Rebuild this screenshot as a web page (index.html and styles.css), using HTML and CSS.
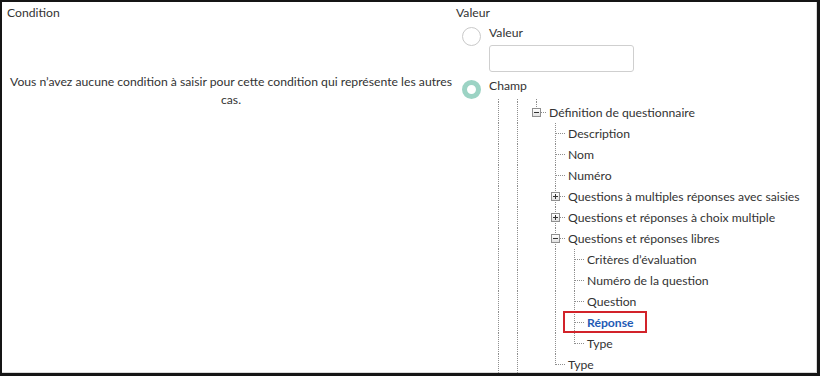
FILE: index.html
```html
<!DOCTYPE html>
<html lang="fr">
<head>
<meta charset="utf-8">
<title>Condition</title>
<link rel="stylesheet" href="styles.css">
</head>
<body>
<div class="frame">
  <div class="layout">
    <section class="col-left">
      <div class="col-head">Condition</div>
      <p class="info">Vous n’avez aucune condition à saisir pour cette condition qui représente les autres cas.</p>
    </section>
    <section class="col-right">
      <div class="col-head">Valeur</div>
      <div class="option">
        <span class="radio"></span>
        <div class="option-body">
          <div class="option-label">Valeur</div>
          <div class="input"></div>
        </div>
      </div>
      <div class="option option-champ">
        <span class="radio checked"></span>
        <div class="option-body">
          <div class="option-label">Champ</div>
        </div>
      </div>
      <div class="tree">
        <div class="row row-top"><span class="c v"></span><span class="c v"></span><span class="c v"></span></div>
        <div class="row"><span class="c v"></span><span class="c v"></span><span class="c up"><i class="box minus"></i></span><span class="t">Définition de questionnaire</span></div>
        <div class="row"><span class="c v"></span><span class="c v"></span><span class="c"></span><span class="c tee"></span><span class="t">Description</span></div>
        <div class="row"><span class="c v"></span><span class="c v"></span><span class="c"></span><span class="c tee"></span><span class="t">Nom</span></div>
        <div class="row"><span class="c v"></span><span class="c v"></span><span class="c"></span><span class="c tee"></span><span class="t">Numéro</span></div>
        <div class="row"><span class="c v"></span><span class="c v"></span><span class="c"></span><span class="c tee"><i class="box plus"></i></span><span class="t">Questions à multiples réponses avec saisies</span></div>
        <div class="row"><span class="c v"></span><span class="c v"></span><span class="c"></span><span class="c tee"><i class="box plus"></i></span><span class="t">Questions et réponses à choix multiple</span></div>
        <div class="row"><span class="c v"></span><span class="c v"></span><span class="c"></span><span class="c tee"><i class="box minus"></i></span><span class="t">Questions et réponses libres</span></div>
        <div class="row"><span class="c v"></span><span class="c v"></span><span class="c"></span><span class="c v"></span><span class="c tee"></span><span class="t">Critères d’évaluation</span></div>
        <div class="row"><span class="c v"></span><span class="c v"></span><span class="c"></span><span class="c v"></span><span class="c tee"></span><span class="t">Numéro de la question</span></div>
        <div class="row"><span class="c v"></span><span class="c v"></span><span class="c"></span><span class="c v"></span><span class="c tee"></span><span class="t">Question</span></div>
        <div class="row row-selected"><span class="c v"></span><span class="c v"></span><span class="c"></span><span class="c v"></span><span class="c tee"></span><span class="t selected">Réponse</span><span class="highlight"></span></div>
        <div class="row"><span class="c v"></span><span class="c v"></span><span class="c"></span><span class="c v"></span><span class="c elbow"></span><span class="t">Type</span></div>
        <div class="row"><span class="c v"></span><span class="c v"></span><span class="c"></span><span class="c elbow"></span><span class="t">Type</span></div>
      </div>
    </section>
  </div>
</div>
</body>
</html>
```

FILE: styles.css
```css
* { box-sizing: border-box; }
html, body { margin: 0; padding: 0; background: #fff; }
body {
  font-family: Lato, "Noto Sans", sans-serif;
  font-size: 12.2px;
  color: #333;
}
.frame {
  width: 820px;
  height: 376px;
  border-style: solid;
  border-color: #151515;
  border-width: 2px 3px 3px 2px;
  overflow: hidden;
}
.layout {
  height: 100%;
  display: grid;
  grid-template-columns: 454px 1fr;
  border-right: 1px solid #d8d8d8;
  border-bottom: 1px solid #d8d8d8;
}
.col-head {
  line-height: 18px;
  padding-top: 2px;
}
.col-left .col-head { padding-left: 5px; }
.info {
  margin: 51px 0 0 0;
  padding: 0 4px 0 8px;
  text-align: center;
  line-height: 18px;
}
.option {
  display: flex;
  gap: 8px;
  padding-left: 6px;
  margin-top: 2px;
}
.option-champ { margin-top: 5px; }
.radio {
  flex: none;
  width: 19px;
  height: 19px;
  border-radius: 50%;
  border: 1px solid #c9c9c9;
  margin-top: 3px;
  background: #fff;
}
.radio.checked {
  border: 5px solid #9cd3c4;
  margin-top: 3px;
}
.option-label { line-height: 18px; }
.input {
  width: 145px;
  height: 27px;
  margin-top: 3px;
  border: 1px solid #cfcfcf;
  border-radius: 3px;
  background: #fff;
}
.tree {
  margin-left: 33px;
  margin-top: 0;
}
.row {
  display: flex;
  height: 21px;
  align-items: center;
  position: relative;
  white-space: nowrap;
}
.row-top { height: 3px; }
.c {
  flex: none;
  width: 19px;
  height: 100%;
  position: relative;
}
.c.v::before, .c.tee::before, .c.elbow::before, .c.up::before {
  content: "";
  position: absolute;
  left: 9px;
  top: 0;
  bottom: 0;
  border-left: 1px dotted #8e8e8e;
}
.c.elbow::before, .c.up::before { bottom: 10px; }
.c.tee::after, .c.elbow::after, .c.up::after {
  content: "";
  position: absolute;
  left: 10px;
  right: 0;
  top: 10px;
  border-top: 1px dotted #8e8e8e;
}
.box {
  position: absolute;
  left: 5px;
  top: 6px;
  width: 9px;
  height: 9px;
  border: 1px solid #8f8f8f;
  background: linear-gradient(#ffffff, #e2e2e2);
  z-index: 1;
}
.box::before {
  content: "";
  position: absolute;
  left: 1px;
  right: 1px;
  top: 3px;
  height: 1px;
  background: #333;
}
.box.plus::after {
  content: "";
  position: absolute;
  top: 1px;
  bottom: 1px;
  left: 3px;
  width: 1px;
  background: #333;
}
.t {
  padding-left: 3px;
  line-height: 21px;
}
.t.selected {
  font-weight: bold;
  color: #1f5bb5;
}
.highlight {
  position: absolute;
  left: 74px;
  top: -1px;
  width: 84px;
  height: 22px;
  border: 2px solid #d2232a;
  pointer-events: none;
}
```
